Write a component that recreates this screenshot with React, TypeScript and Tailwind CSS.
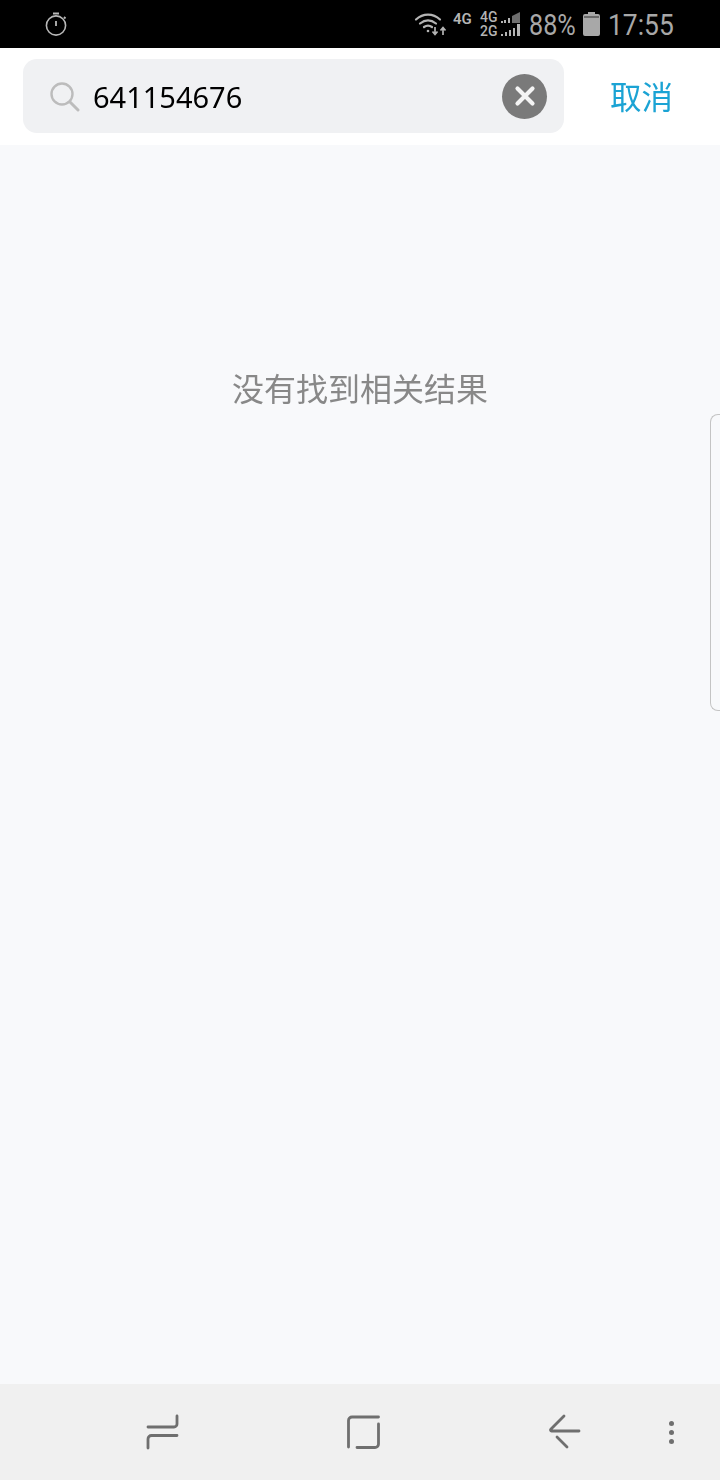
const cjk = "font-['Noto_Sans_CJK_SC',sans-serif] [will-change:transform]";

function StatusBar() {
  return (
    <div className="flex h-12 items-center justify-between bg-black pl-[44px] pr-[46px] text-[#b4b4b4]">
      <svg width="24" height="24" viewBox="0 0 24 24" fill="none" stroke="#b8b8b8" strokeWidth="1.6">
        <circle cx="12" cy="13.5" r="9.6" />
        <path d="M9 1.5h6M12 9v5M20 5l1.5 1.5" strokeWidth="1.8" />
      </svg>
      <div className="flex items-center">
        <svg width="34" height="26" viewBox="0 0 34 26" fill="none" stroke="#b4b4b4" strokeWidth="2.2" strokeLinecap="round" className="mr-[5px]">
          <path d="M2 8.5C9 2 19 2 26 8.5" />
          <path d="M6 12.5c5-4 11-4 16 0" />
          <path d="M10 16c2.500-1.800 5.500-1.800 8 0" />
          <circle cx="14" cy="20" r="1.300" fill="#b4b4b4" stroke="none" />
          <path d="M21 16v7M18.500 20.500l2.500 3 2.500-3M29 24v-7M26.500 19.500l2.500-3 2.500 3" strokeWidth="1.700" strokeLinecap="butt" />
        </svg>
        <span className="mb-[10px] w-[26px] font-['Roboto',sans-serif] text-[15px] leading-none font-semibold">4G</span>
        <div className="ml-[1px] flex w-[19px] flex-col font-['Roboto',sans-serif] text-[14px] leading-[14px] font-medium">
          <span>4G</span>
          <span>2G</span>
        </div>
        <svg width="22" height="28" viewBox="0 0 22 28" fill="#b4b4b4" className="mr-[8px]">
          <path d="M2 11h2v2H2zM5 10h2v3H5zM9 8h2v5H9z" />
          <path d="M13 13V6l8-4v11z" fill="#6e6e6e" />
          <path d="M2 24h2v2H2zM6 22h2v4H6zM10 20h2v6h-2zM14 18h2v8h-2zM18 14h3v12h-3z" />
        </svg>
        <span className="mt-[1px] w-[54px] origin-left scale-x-[0.84] font-['Roboto',sans-serif] text-[30px] leading-none font-normal whitespace-nowrap text-[#a8a8a8]">88%</span>
        <svg width="17" height="24" viewBox="0 0 17 24" className="mr-[8px]">
          <path d="M5 0h7v2h3a2 2 0 0 1 2 2v18a2 2 0 0 1-2 2H2a2 2 0 0 1-2-2V4a2 2 0 0 1 2-2h3z" fill="#a8a8a8" />
          <path d="M1 4h15v2H1z" fill="#6a6a6a" />
        </svg>
        <span className="mt-[1px] w-[66px] origin-left scale-x-[0.88] font-['Roboto',sans-serif] text-[30px] leading-none font-normal whitespace-nowrap text-[#a8a8a8]">17:55</span>
      </div>
    </div>
  );
}

function SearchHeader() {
  return (
    <div className="flex h-[97px] items-start bg-white pt-[11px] pr-[47px] pl-[23px]">
      <div className="flex h-[74px] w-[541px] items-center rounded-[14px] bg-[#f0f1f3] pr-[17px] pl-[27px]">
        <svg width="30" height="30" viewBox="0 0 30 30" fill="none" stroke="#bcbcbc" strokeWidth="2.400" className="mt-[2px] shrink-0">
          <circle cx="12" cy="12" r="10.500" />
          <path d="M20 20l8 8" strokeLinecap="round" strokeWidth="3" />
        </svg>
        <span className="mt-[1px] ml-[13px] flex-1 font-['Noto_Sans',sans-serif] text-[29px] text-black [will-change:transform]">641154676</span>
        <div className="flex h-[45px] w-[45px] items-center justify-center rounded-full bg-[#7a7a7a]">
          <svg width="24" height="24" viewBox="0 0 24 24" stroke="#f4f4f4" strokeWidth="4.200" strokeLinecap="round">
            <path d="M4.500 4.500l15 15M19.500 4.500l-15 15" />
          </svg>
        </div>
      </div>
      <span className={`mt-[21px] ml-auto text-[31.500px] leading-none text-[#1ba3d4] ${cjk}`}>取消</span>
    </div>
  );
}

function NavBar() {
  return (
    <div className="relative flex h-[96px] items-center bg-[#f0f0f0]">
      <div className="ml-[146px]">
        <svg width="33" height="36" viewBox="0 0 33 36" fill="none" stroke="#6f6f6f" strokeWidth="2.800" strokeLinecap="round">
          <path d="M31 2v8a3 3 0 0 1-3 3H2" />
          <path d="M2 34v-9a3.500 3.500 0 0 1 3.500-3.500H31" />
        </svg>
      </div>
      <div className="ml-[168px]">
        <svg width="33" height="34" viewBox="0 0 33 34" fill="none" stroke="#6f6f6f" strokeWidth="2.800" strokeLinecap="round">
          <path d="M31.500 2H5a3.500 3.500 0 0 0-3.500 3.500V32" />
          <path d="M31.500 9v20a3.500 3.500 0 0 1-3.500 3.500H10" />
        </svg>
      </div>
      <div className="ml-[168px]">
        <svg width="33" height="36" viewBox="0 0 33 36" fill="none" stroke="#6f6f6f" strokeWidth="2.800" strokeLinecap="round">
          <path d="M31 17H3.500a1 1 0 0 1-.7-1.700L16 2" />
          <path d="M9 23l10 10" />
        </svg>
      </div>
      <div className="ml-[88px] flex flex-col gap-[4px]">
        <span className="h-[5px] w-[5px] rounded-full bg-[#6f6f6f]" />
        <span className="h-[5px] w-[5px] rounded-full bg-[#6f6f6f]" />
        <span className="h-[5px] w-[5px] rounded-full bg-[#6f6f6f]" />
      </div>
    </div>
  );
}

export default function App() {
  return (
    <div className="flex h-[1480px] w-[720px] flex-col overflow-hidden bg-[#f8f9fb]">
      <StatusBar />
      <SearchHeader />
      <div className="relative flex-1">
        <p className={`pt-[217px] text-center text-[32px] leading-[50px] text-[#888888] ${cjk}`}>没有找到相关结果</p>
        {/* edge panel handle */}
        <div className="absolute top-[269px] right-0 h-[297px] w-[10px] rounded-l-[8px] border-y border-l border-[#c4c4c4]" />
      </div>
      <NavBar />
    </div>
  );
}
